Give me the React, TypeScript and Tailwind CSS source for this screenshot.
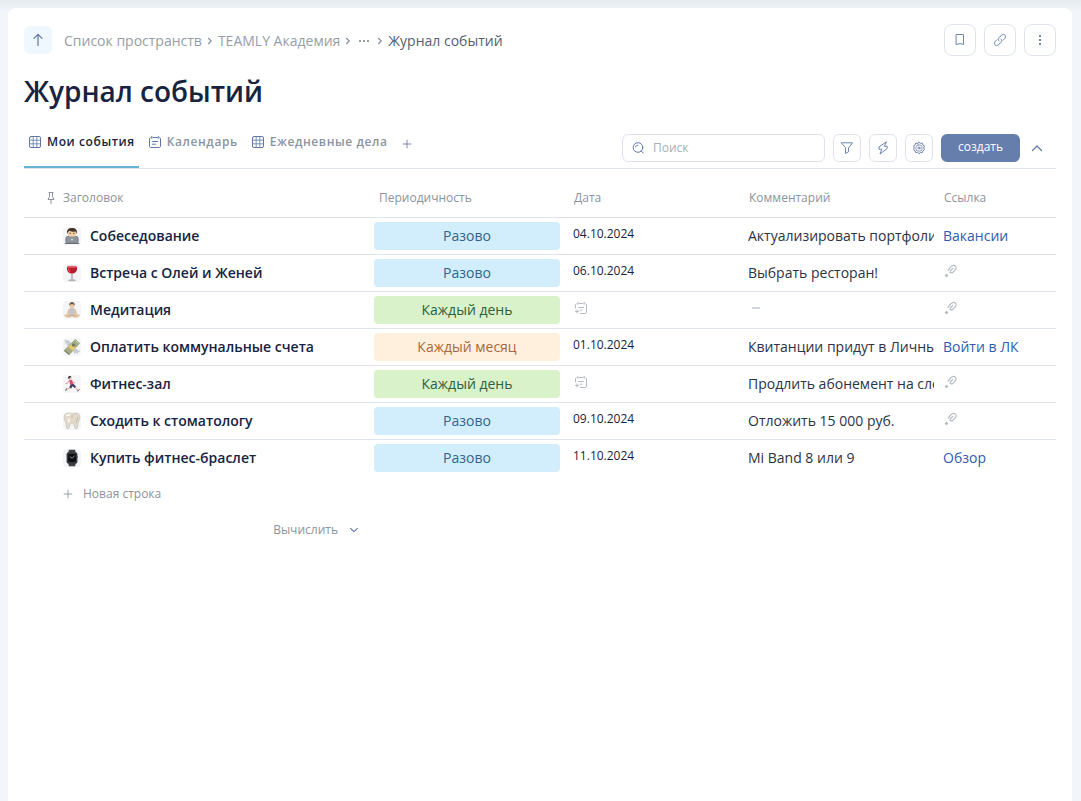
import { useState } from "react";
import type { ReactNode } from "react";

type Period = "once" | "daily" | "monthly";

interface EventRow {
  title: string;
  icon: ReactNode;
  period: Period;
  date?: string;
  comment?: string;
  link?: string;
}

const PERIODS: Record<Period, { label: string; style: string }> = {
  once: { label: "Разово", style: "bg-[#d2eefc] text-[#2f6690]" },
  daily: { label: "Каждый день", style: "bg-[#d9f2c9] text-[#2c6140]" },
  monthly: { label: "Каждый месяц", style: "bg-[#fff0dd] text-[#a8683c]" },
};

function Laptop() {
  return (
    <svg width="18" height="18" viewBox="0 0 18 18" aria-hidden="true">
      <path d="M2.500 15V11.500c0-2 2.500-3 6.500-3s6.500 1 6.500 3V15z" fill="#5d6470" />
      <ellipse cx="9" cy="6.200" rx="4.300" ry="4.500" fill="#f3cfa4" />
      <path d="M4.200 7C3.300 2.800 5.500 1 9 1s5.700 1.800 4.800 6l-1-2.500C11.500 4.800 8.500 4.800 6.500 3.700 5.300 4.300 4.600 5.500 4.200 7z" fill="#433329" />
      <path d="M6.500 6.300h1.400M10.100 6.300h1.400" stroke="#57402f" strokeWidth=".9" />
      <rect x="3.200" y="9.500" width="11.600" height="6.800" rx=".6" fill="#8d949c" />
      <path d="M1.800 15.700h14.400V17H1.800z" fill="#686f78" />
      <circle cx="9" cy="12.600" r=".9" fill="#e5e8ec" />
    </svg>
  );
}

function Wine() {
  return (
    <svg width="18" height="18" viewBox="0 0 18 18" aria-hidden="true">
      <path d="M4.300 1.200h9.400c1 5-.8 8.600-4.700 8.600S3.300 6.200 4.300 1.200z" fill="#e8dede" />
      <path d="M4 3h10c.5 4-1.300 6.500-5 6.500S3.500 7 4 3z" fill="#bd1c2c" />
      <ellipse cx="9" cy="3" rx="5" ry="1.100" fill="#dd5058" />
      <path d="M5.600 4.800c0 1.500.6 2.500 1.500 3" stroke="#ef8a8f" strokeWidth=".8" fill="none" />
      <path d="M9 9.500v6.500" stroke="#a9a6aa" strokeWidth="1.400" />
      <ellipse cx="9" cy="16.200" rx="3.800" ry="1" fill="#b5b3ba" />
    </svg>
  );
}

function Meditation() {
  return (
    <svg width="18" height="18" viewBox="0 0 18 18" aria-hidden="true">
      <path d="M4 12.500c.5-3.500 1.500-5.300 5-5.300s4.500 1.800 5 5.300l-2 2H6z" fill="#e2c4a6" />
      <path d="M6.500 7.700c1.500-.6 3.500-.6 5 0l.2 6.300H6.300z" fill="#c3c4c9" />
      <circle cx="9" cy="4.500" r="2.600" fill="#eac8a5" />
      <path d="M6.300 4.600C6.100 2.200 7.200 1 9 1s2.900 1.200 2.700 3.600C11 3.300 10 3.200 9 3.200s-2 .1-2.700 1.400z" fill="#6f5a4b" />
      <path d="M.8 14.300c2.400-1.900 5.400-1.500 8.200-.3 2.800-1.200 5.800-1.600 8.200.3-1.500 3-5 2.800-8.200 1.400-3.200 1.400-6.700 1.600-8.200-1.400z" fill="#e4c8aa" />
      <path d="M4.500 14.800c2 .4 3.500 0 4.500-.7 1 .7 2.500 1.100 4.500.7" stroke="#b9977a" strokeWidth=".7" fill="none" />
    </svg>
  );
}

function Money() {
  return (
    <svg width="18" height="18" viewBox="0 0 18 18" aria-hidden="true">
      <path d="M8 5C5.500 1.500 3 1.500.8 2.700l2 1.300-1.300 1.300 2.500.5-.5 1.700 3.500.3zM11 10.500c2.500.2 4.700 1.300 6.300 3.500l-2.200.1v1.900l-2.400-1.400-.8 1.400-2.100-2.800z" fill="#c7cecf" />
      <path d="M.8 12.800L12.300 1.300l4.400 4L6 17z" fill="#6f785b" />
      <path d="M1.500 11.900L12.300 1.300l4.400 4L6.600 15.900z" fill="#a5ad86" />
      <path d="M5.100 8.900l3.100-3 4.800 3.900-3 3.200z" fill="#e2c776" />
      <circle cx="10.500" cy="7" r="1.600" fill="#6e7957" />
      <path d="M12.500 2.500l2.800 2.500" stroke="#dae0c3" strokeWidth=".9" />
    </svg>
  );
}

function Runner() {
  return (
    <svg width="18" height="18" viewBox="0 0 18 18" aria-hidden="true">
      <circle cx="6.600" cy="3" r="1.600" fill="#f0c39c" />
      <path d="M5 3c0-1.500 1-2.200 2.200-2 .9.200 1.300.8 1.100 1.500L6.800 2.200 6.300 4z" fill="#3a2d2b" />
      <path d="M6 5l3-.3 1.700 5-3.200.7z" fill="#e6486d" />
      <path d="M6.300 5.600L4.600 8.200l-2.100.3M8.800 5.400l1.700 2.600 1.900-.5" stroke="#e98fa0" strokeWidth="1" fill="none" />
      <path d="M7.500 9.800l3.200-.8 2.500 3-1.400 1-2.300-1.700-1.400 2.200-1.900-.8z" fill="#3b3f63" />
      <path d="M12.500 12.300l2.500 3.200M6.800 13l-3.700 1.500" stroke="#e8ae8a" strokeWidth="1.100" />
      <path d="M14.300 16.200l2.200-1.700M3.500 13.500l-.8 2.300" stroke="#465375" strokeWidth="1" />
    </svg>
  );
}

function Tooth() {
  return (
    <svg width="18" height="18" viewBox="0 0 18 18" aria-hidden="true">
      <path
        d="M4.800 1.200C6.800 1 7.900 1.900 9 1.900s2.200-.9 4.200-.7c2.900.3 4.100 2.700 3.500 5.300-.5 2.100-1.400 3-1.600 5-.2 2.500-.6 5.300-1.900 5.500-1.700.2-1.500-6-4.200-6s-2.500 6.200-4.200 6c-1.300-.2-1.700-3-1.900-5.500-.2-2-1.100-2.900-1.600-5C.7 3.900 1.900 1.500 4.800 1.200z"
        fill="#e2d9ca" stroke="#c3b8a7" strokeWidth=".6"
      />
      <path d="M3.400 4c.8-1.400 2.600-1.400 4-.8M6 6.500l-.3 4" stroke="#fffdf8" strokeWidth="1.300" fill="none" />
      <path d="M14.500 5c.3 2-1 3.500-1.200 5.500M9 3v3" stroke="#c6b8a2" fill="none" />
    </svg>
  );
}

function Watch() {
  return (
    <svg width="18" height="18" viewBox="0 0 18 18" aria-hidden="true">
      <path d="M5.800.8h6.400l.6 4H5.200zM5.200 13.200h7.600l-.6 4H5.800z" fill="#3e4043" />
      <rect x="3.600" y="3.200" width="10.800" height="11.600" rx="2" fill="#37393c" />
      <rect x="5.200" y="4.900" width="7.600" height="8.200" rx=".8" fill="#0d0e10" />
      <path d="M6.800 7.500l2.200 1.800 2.600-2.400" stroke="#a5a9ae" strokeWidth=".8" fill="none" />
      <path d="M14.500 7v2" stroke="#75787c" />
    </svg>
  );
}

const ROWS: EventRow[] = [
  { title: "Собеседование", icon: <Laptop />, period: "once", date: "04.10.2024", comment: "Актуализировать портфоли", link: "Вакансии" },
  { title: "Встреча с Олей и Женей", icon: <Wine />, period: "once", date: "06.10.2024", comment: "Выбрать ресторан!" },
  { title: "Медитация", icon: <Meditation />, period: "daily" },
  { title: "Оплатить коммунальные счета", icon: <Money />, period: "monthly", date: "01.10.2024", comment: "Квитанции придут в Личны", link: "Войти в ЛК" },
  { title: "Фитнес-зал", icon: <Runner />, period: "daily", comment: "Продлить абонемент на сле" },
  { title: "Сходить к стоматологу", icon: <Tooth />, period: "once", date: "09.10.2024", comment: "Отложить 15 000 руб." },
  { title: "Купить фитнес-браслет", icon: <Watch />, period: "once", date: "11.10.2024", comment: "Mi Band 8 или 9", link: "Обзор" },
];

function Icon({ size = 14, children, className = "" }: { size?: number; children: ReactNode; className?: string }) {
  return (
    <svg
      width={size} height={size} viewBox="0 0 14 14" fill="none" stroke="currentColor"
      strokeLinecap="round" strokeLinejoin="round" aria-hidden="true"
      className={"shrink-0 " + className}
    >
      {children}
    </svg>
  );
}

function GridIcon() {
  return (
    <Icon>
      <rect x="1.500" y="1.500" width="11" height="11" rx="1.500" />
      <path d="M5.200 1.500v11M8.800 1.500v11M1.500 5.200h11M1.500 8.800h11" strokeWidth=".8" />
    </Icon>
  );
}

function CalendarIcon() {
  return (
    <Icon>
      <path d="M5 2.500h4M3.800 1.300v2.200M10.200 1.300v2.200M2.500 2.500c-.7.200-1 .7-1 1.500v7c0 1 .5 1.500 1.500 1.500h8c1 0 1.500-.5 1.500-1.500V4c0-.8-.3-1.300-1-1.500M4.500 6.500h5M4.500 9.200h3" />
    </Icon>
  );
}

function AddDateIcon() {
  return (
    <Icon className="text-[#b4bac1]">
      <path d="M6 2.500h4M4.800 1.300v2M11.200 1.300v2M3 2.800c-.4.300-.5.700-.5 1.200v3M12.800 2.800c.5.300.7.700.7 1.200v7c0 1-.5 1.500-1.500 1.500H7.500M5.500 6.500h5M7 9.200h2M2.500 10.500h3M4 9v3" />
    </Icon>
  );
}

function AddLinkIcon() {
  return (
    <Icon className="text-[#b4bac1]">
      <path d="M5.200 6.200L7.700 2.900c1.500-1.500 3.600-1.900 4.700-.8 1.200 1.200.8 3-.6 4.300L10 8.200c-1 .9-2.200.8-3 .1M9.800 4.300L7.200 7" strokeWidth="1.200" />
      <path d="M2.500 11.500h2M3.500 10.500v2" strokeWidth="1.500" />
    </Icon>
  );
}

function Chevron() {
  return (
    <svg width="6" height="8" viewBox="0 0 6 8" fill="none" stroke="#8a949e" strokeWidth="1.200" aria-hidden="true">
      <path d="M1.200 1l3 3-3 3" />
    </svg>
  );
}

function SquareButton({ label, big = false, children }: { label: string; big?: boolean; children: ReactNode }) {
  return (
    <button
      type="button" aria-label={label}
      className={
        "flex shrink-0 items-center justify-center border border-[#dfe3ee] bg-white text-[#6f85ad] " +
        (big ? "size-8 rounded-lg" : "size-7 rounded-md")
      }
    >
      {children}
    </button>
  );
}

const TABS = [
  { name: "Мои события", icon: <GridIcon /> },
  { name: "Календарь", icon: <CalendarIcon /> },
  { name: "Ежедневные дела", icon: <GridIcon /> },
];

export default function App() {
  const [tab, setTab] = useState(0);
  const [query, setQuery] = useState("");
  const rows = ROWS.filter((row) => row.title.toLowerCase().includes(query.toLowerCase()));

  return (
    <div className="min-h-screen bg-[#f2f5f9] bg-linear-to-b from-[#e6ebef] to-[#f2f5f9] to-[12px] px-2 pt-2 pr-[9px] font-['Open_Sans','Noto_Sans',sans-serif] text-sm text-[#172340]">
      <main className="min-h-[calc(100vh-8px)] rounded-t-lg bg-white p-4">
        <header className="flex items-center justify-between">
          <div className="flex items-center gap-3">
            <button type="button" aria-label="Наверх" className="flex size-7 items-center justify-center rounded-md bg-[#eff8fe] text-[#6078a5]">
              <Icon><path d="M7 12.500V1.500M3 5.300L7 1.300l4 4" strokeWidth="1.200" /></Icon>
            </button>
            <nav aria-label="Путь" className="flex items-center gap-[5px] pt-[2px] text-[#959ea6]">
              <a href="#spaces">Список пространств</a>
              <Chevron />
              <a href="#academy">TEAMLY Академия</a>
              <Chevron />
              <button type="button" aria-label="Показать весь путь" className="flex w-4 justify-center gap-[2px]">
                <span className="size-[2px] bg-[#959ea6]" />
                <span className="size-[2px] bg-[#959ea6]" />
                <span className="size-[2px] bg-[#959ea6]" />
              </button>
              <Chevron />
              <span className="text-[#535f6d]">Журнал событий</span>
            </nav>
          </div>
          <div className="flex gap-2">
            <SquareButton big label="В закладки">
              <Icon><path d="M3.500 1.500h7v10L7 10.500l-3.500 1z" /></Icon>
            </SquareButton>
            <SquareButton big label="Скопировать ссылку">
              <Icon><path d="M6 8c-1-1-1-2.300 0-3.300l2.500-2.600c1-1 2.500-.9 3.400 0 .9.900.9 2.400 0 3.300l-1.700 1.800M8 6c1 1 1 2.300 0 3.300l-2.500 2.600c-1 1-2.500.9-3.400 0-.9-.9-.9-2.400 0-3.300l1.700-1.800" /></Icon>
            </SquareButton>
            <SquareButton big label="Ещё">
              <Icon><path d="M6 2h2v2H6zM6 6h2v2H6zM6 10h2v2H6z" fill="currentColor" stroke="none" /></Icon>
            </SquareButton>
          </div>
        </header>

        <h1 className="mt-[15px] text-[28px] leading-10 font-semibold">Журнал событий</h1>

        <div className="mt-[15px] flex items-stretch justify-between border-b border-[#dfe3ee]">
          <div className="flex gap-[5px] text-[12px] font-semibold tracking-wider text-[#8a949e]">
            {TABS.map((item, index) => (
              <button
                key={item.name} type="button" onClick={() => setTab(index)} aria-pressed={tab === index}
                className={
                  "-mb-px flex h-[42px] items-start gap-[5px] border-b-2 px-1 pt-2 leading-4 " +
                  (tab === index ? "border-[#66b3d3] text-[#172340]" : "border-transparent")
                }
              >
                <span className="pt-px text-[#6078a5]">{item.icon}</span>
                {item.name}
              </button>
            ))}
            <button type="button" aria-label="Добавить вид" className="flex h-9 w-5 items-center justify-center text-[#6078a5]">
              <Icon size={12}><path d="M7 2.500v9M2.500 7h9" /></Icon>
            </button>
          </div>
          <div className="flex items-center gap-2 pb-[6px] pt-[8px]">
            <label className="flex h-7 w-[203px] items-center gap-2 rounded-md border border-[#dfe3ee] px-2 text-[#6078a5]">
              <Icon><circle cx="7" cy="6.500" r="4.800" /><path d="M10.500 10.200l1.700 1.800M4.500 6c.2-1 .9-1.700 2-1.800" /></Icon>
              <input
                type="search" aria-label="Поиск" placeholder="Поиск" value={query}
                onChange={(event) => setQuery(event.target.value)}
                className="min-w-0 flex-1 text-[12px] text-[#172340] outline-none placeholder:text-[#a7afb6]"
              />
            </label>
            <SquareButton label="Фильтр">
              <Icon><path d="M1.500 1.800h11L8.500 7v3.800l-3 1.700V7z" /></Icon>
            </SquareButton>
            <SquareButton label="Автоматизация">
              <Icon><path d="M10.200 1L3 6v2.200h2.800L4 13l7.200-5.500V5.300H8.700z" /></Icon>
            </SquareButton>
            <SquareButton label="Настройки">
              <Icon>
                <path d="M7 1.300l1.500 1.100 1.800-.3.500 1.700 1.600.9-.6 2.300.6 1.800-1.500 1-.6 1.800-1.900-.1L7 12.700l-1.400-1.200-1.900.1-.6-1.800-1.500-1L2.200 7l-.6-2.300 1.600-.9.500-1.700 1.800.3z" />
                <rect x="4" y="4" width="6" height="6" rx="2" strokeWidth=".8" />
                <circle cx="7" cy="7" r="1" />
              </Icon>
            </SquareButton>
            <button type="button" className="h-7 w-[79px] rounded-md bg-[#667eac] pb-[2px] text-[12px] font-medium text-white">создать</button>
            <button type="button" aria-label="Свернуть" className="mr-[10px] flex h-7 w-[18px] items-center justify-center text-[#6078a5]">
              <Icon><path d="M2.500 9.500L7 5l4.500 4.500" strokeWidth="1.200" /></Icon>
            </button>
          </div>
        </div>

        <table className="w-full table-fixed border-collapse text-left">
          <colgroup>
            <col className="w-[346px]" />
            <col className="w-[195px]" />
            <col className="w-[175px]" />
            <col className="w-[195px]" />
            <col />
          </colgroup>
          <thead>
            <tr className="h-12 border-b border-[#dfe3ee] text-[12px] text-[#8a949e] [&>th]:pt-[10px] [&>th]:font-normal">
              <th scope="col" className="pl-5">
                <span className="flex items-center gap-[5px]">
                  <Icon><path d="M5 1.500h4M5.500 1.500v4.200L4 8.500h6L8.500 5.700V1.500M7 8.500v4" /></Icon>
                  Заголовок
                </span>
              </th>
              <th scope="col" className="pl-[9px]">Периодичность</th>
              <th scope="col" className="pl-[9px]">Дата</th>
              <th scope="col" className="pl-[9px]">Комментарий</th>
              <th scope="col" className="pl-[9px]">Ссылка</th>
            </tr>
          </thead>
          <tbody>
            {rows.map((row) => (
              <tr key={row.title} className="h-[37px] border-b border-[#dfe3ee] last:border-b-0">
                <th scope="row" className="pl-[39px] font-semibold">
                  <span className="flex items-center gap-[9px]">
                    <span className="rounded-[4px] bg-[#f3f5f7]">{row.icon}</span>
                    {row.title}
                  </span>
                </th>
                <td className="pl-1">
                  <span className={"flex h-7 w-[186px] items-center justify-center rounded-[4px] " + PERIODS[row.period].style}>
                    {PERIODS[row.period].label}
                  </span>
                </td>
                <td className="pb-1 pl-2 text-[12px]">
                  {row.date ?? <button type="button" aria-label="Указать дату" className="block"><AddDateIcon /></button>}
                </td>
                <td className="pl-2 text-[#2b3345]">
                  {row.comment ? (
                    <span className="block w-[186px] overflow-hidden whitespace-nowrap">{row.comment}</span>
                  ) : (
                    <span className="mb-1 ml-1 block h-[2px] w-2 bg-[#d3d7dc]" />
                  )}
                </td>
                <td className="pl-2">
                  {row.link ? (
                    <a href="#link" className="text-[#2f5cb0]">{row.link}</a>
                  ) : (
                    <button type="button" aria-label="Добавить ссылку" className="mb-1 block"><AddLinkIcon /></button>
                  )}
                </td>
              </tr>
            ))}
          </tbody>
        </table>

        <button type="button" className="flex h-9 items-center gap-[9px] pl-[38px] text-[12px] text-[#8a949e]">
          <Icon size={12}><path d="M7 2.500v9M2.500 7h9" /></Icon>
          Новая строка
        </button>
        <div className="flex w-[346px] justify-end pr-[10px]">
          <button type="button" className="flex h-9 items-center gap-[10px] text-[12px] text-[#8a949e]">
            Вычислить
            <Icon size={12} className="text-[#6078a5]"><path d="M3 5l4 4 4-4" strokeWidth="1.200" /></Icon>
          </button>
        </div>
      </main>
    </div>
  );
}
